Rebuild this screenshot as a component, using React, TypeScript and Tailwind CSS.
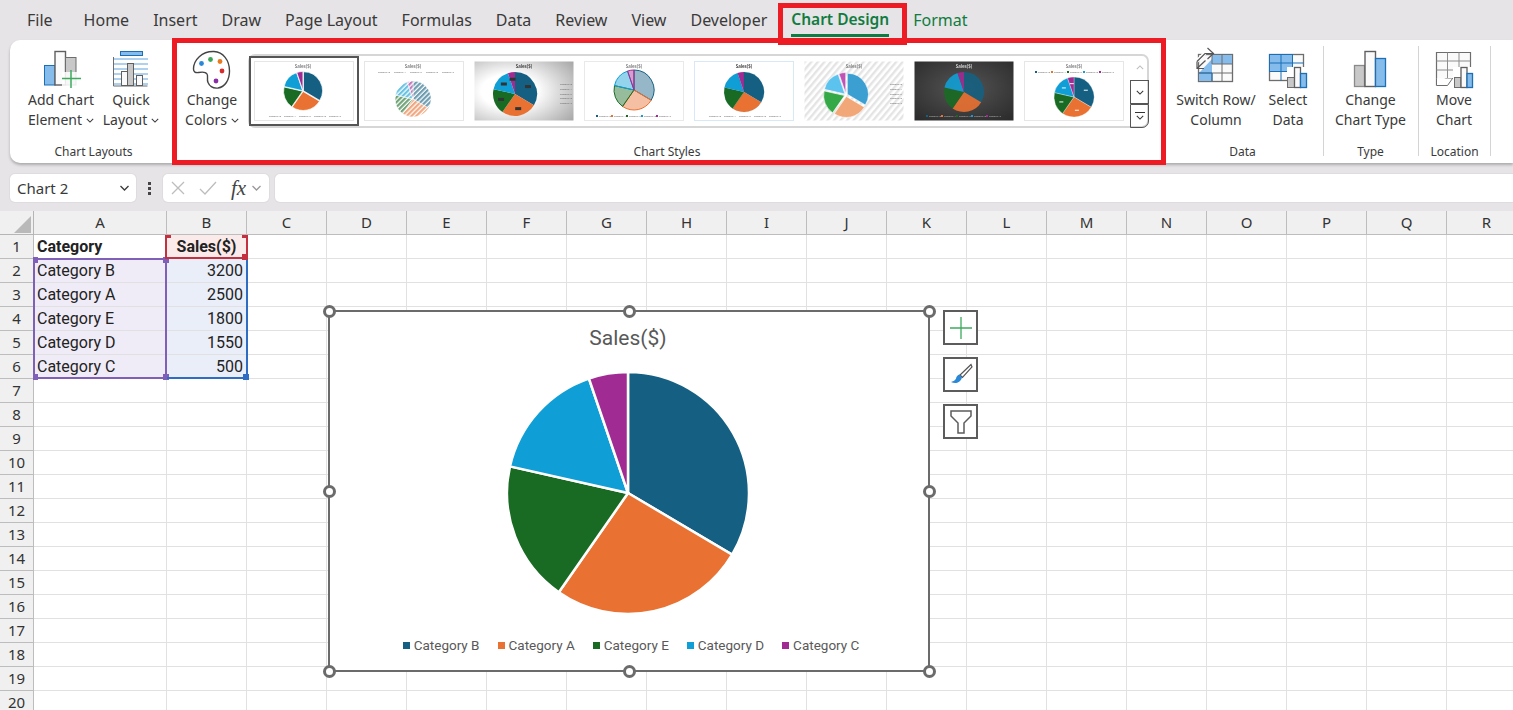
import type { ReactNode } from "react";

const uiFont = "font-['Noto_Sans',sans-serif]";
const cellFont = "font-['Roboto',sans-serif]";

const tabs = ["Home", "Insert", "Draw", "Page Layout", "Formulas", "Data", "Review", "View", "Developer"];
const columns = ["A", "B", "C", "D", "E", "F", "G", "H", "I", "J", "K", "L", "M", "N", "O", "P", "Q", "R"];
const rows = Array.from({ length: 20 }, (_, i) => i + 1);

const sales = [
  { name: "Category B", value: 3200, color: "#156082" },
  { name: "Category A", value: 2500, color: "#e97132" },
  { name: "Category E", value: 1800, color: "#196b24" },
  { name: "Category D", value: 1550, color: "#0f9ed5" },
  { name: "Category C", value: 500, color: "#a02b93" },
];

const cells: Record<string, { text: string; bold?: boolean; right?: boolean; bg?: string }> = {
  "1-A": { text: "Category", bold: true },
  "1-B": { text: "Sales($)", bold: true, bg: "bg-[#fbeaea]" },
  "2-A": { text: "Category B", bg: "bg-[#f0ecf7]" },
  "3-A": { text: "Category A", bg: "bg-[#f0ecf7]" },
  "4-A": { text: "Category E", bg: "bg-[#f0ecf7]" },
  "5-A": { text: "Category D", bg: "bg-[#f0ecf7]" },
  "6-A": { text: "Category C", bg: "bg-[#f0ecf7]" },
  "2-B": { text: "3200", right: true, bg: "bg-[#e9eef8]" },
  "3-B": { text: "2500", right: true, bg: "bg-[#e9eef8]" },
  "4-B": { text: "1800", right: true, bg: "bg-[#e9eef8]" },
  "5-B": { text: "1550", right: true, bg: "bg-[#e9eef8]" },
  "6-B": { text: "500", right: true, bg: "bg-[#e9eef8]" },
};

function slices(cx: number, cy: number, r: number, explode = 0) {
  const total = sales.reduce((sum, s) => sum + s.value, 0);
  let angle = -Math.PI / 2;
  return sales.map((s) => {
    const sweep = (s.value / total) * Math.PI * 2;
    const mid = angle + sweep / 2;
    const ox = cx + Math.cos(mid) * explode;
    const oy = cy + Math.sin(mid) * explode;
    const x1 = ox + Math.cos(angle) * r;
    const y1 = oy + Math.sin(angle) * r;
    const x2 = ox + Math.cos(angle + sweep) * r;
    const y2 = oy + Math.sin(angle + sweep) * r;
    const large = sweep > Math.PI ? 1 : 0;
    angle += sweep;
    return {
      ...s,
      mid,
      d: `M${ox} ${oy}L${x1} ${y1}A${r} ${r} 0 ${large} 1 ${x2} ${y2}Z`,
    };
  });
}

type Thumb = {
  cx: number;
  cy: number;
  r: number;
  explode?: number;
  bg: string;
  frame?: string;
  stroke?: string;
  strokeWidth?: number;
  opacity?: number;
  palette?: string[];
  titleColor?: string;
  legend: "top" | "bottom" | "right";
  legendColor?: string;
  swatches?: boolean;
  labels?: "dark" | "white";
  hatch?: boolean;
  outline?: boolean;
};

const thumbs: Thumb[] = [
  { cx: 49, cy: 30, r: 19, explode: 0.5, bg: "#fff", frame: "#e6e6e6", stroke: "#fff", strokeWidth: 0.7, legend: "bottom" },
  { cx: 49, cy: 38, r: 18, bg: "#fff", frame: "#e6e6e6", stroke: "#fff", strokeWidth: 0.5, legend: "top", hatch: true },
  { cx: 41, cy: 33, r: 22, bg: "url(#thumb-grey)", legend: "right", labels: "dark", titleColor: "#333" },
  { cx: 50, cy: 29, r: 20, bg: "#fff", frame: "#e9e9e9", opacity: 0.45, outline: true, legend: "bottom", swatches: true },
  { cx: 50, cy: 31, r: 20, bg: "#fff", frame: "#d8e8f5", legend: "bottom", titleColor: "#333", stroke: "#156082", strokeWidth: 0.1 },
  {
    cx: 42,
    cy: 34,
    r: 21,
    explode: 1.5,
    bg: "url(#thumb-stripes)",
    stroke: "#fff",
    strokeWidth: 0.6,
    palette: ["#3c9fd2", "#f2a779", "#35a948", "#5cc2ee", "#c053b6"],
    legend: "right",
  },
  { cx: 50, cy: 31, r: 20, bg: "url(#thumb-dark)", opacity: 0.9, legend: "bottom", titleColor: "#ddd", legendColor: "#bbb" },
  { cx: 50, cy: 36, r: 20, bg: "#fff", frame: "#e6e6e6", stroke: "#fff", strokeWidth: 0.3, legend: "top", swatches: true, labels: "white" },
];

function MiniChart({ t, index }: { t: Thumb; index: number }) {
  const parts = slices(t.cx, t.cy, t.r, t.explode);
  const legendFill = t.legendColor ?? "#666";
  return (
    <svg viewBox="0 0 100 60" className="h-[60px] w-[100px] shrink-0 blur-[0.35px]">
      <defs>
        <radialGradient id="thumb-grey" cx="0.35" cy="0.5" r="0.8">
          <stop offset="0.35" stopColor="#fff" />
          <stop offset="1" stopColor="#a9a9a9" />
        </radialGradient>
        <radialGradient id="thumb-dark" cx="0.5" cy="0.45" r="0.7">
          <stop offset="0" stopColor="#555" />
          <stop offset="1" stopColor="#2c2c2c" />
        </radialGradient>
        <pattern id="thumb-stripes" width="5" height="5" patternUnits="userSpaceOnUse" patternTransform="rotate(40)">
          <rect width="5" height="5" fill="#fff" />
          <rect width="2.4" height="5" fill="#e4e4e4" />
        </pattern>
        {parts.map((p) => (
          <pattern key={p.name} id={`hatch-${index}-${p.name.slice(-1)}`} width="3.4" height="3.4" patternUnits="userSpaceOnUse" patternTransform="rotate(-45)">
            <rect width="3.4" height="3.4" fill="#fff" />
            <rect width="3.4" height="2.2" fill={p.color} opacity="0.62" />
          </pattern>
        ))}
      </defs>
      <rect x="0.5" y="0.5" width="99" height="59" fill={t.bg} stroke={t.frame ?? "none"} />
      <text x={t.cx === 41 || t.cx === 42 ? 50 : t.cx} y={6.5} textAnchor="middle" fontSize="4.4" fontWeight="600" fill={t.titleColor ?? "#777"} fontFamily="Noto Sans, sans-serif">
        Sales($)
      </text>
      {parts.map((p, i) => (
        <path
          key={p.name}
          d={p.d}
          fill={t.hatch ? `url(#hatch-${index}-${p.name.slice(-1)})` : t.palette ? t.palette[i] : p.color}
          fillOpacity={t.opacity ?? 1}
          stroke={t.outline ? p.color : t.stroke ?? "none"}
          strokeWidth={t.outline ? 1 : t.strokeWidth ?? 0}
        />
      ))}
      {t.labels &&
        parts.map((p) => {
          const lx = t.cx + Math.cos(p.mid) * t.r * 0.68;
          const ly = t.cy + Math.sin(p.mid) * t.r * 0.68;
          return t.labels === "dark" ? (
            <rect key={p.name} x={lx - 3} y={ly - 1.5} width="6" height="3" fill="#333" />
          ) : (
            <rect key={p.name} x={lx - 2} y={ly - 0.6} width="4" height="1.2" fill="#fff" opacity="0.8" />
          );
        })}
      {t.legend === "bottom" &&
        sales.map((s, i) => (
          <g key={s.name}>
            {(t.swatches || t.legendColor) && <rect x={12 + i * 15} y={54} width="2" height="2" fill={s.color} />}
            <text x={15 + i * 15} y={56} fontSize="2.3" fill={legendFill} fontFamily="Noto Sans, sans-serif">
              {s.name}
            </text>
          </g>
        ))}
      {t.legend === "top" &&
        sales.map((s, i) => (
          <g key={s.name}>
            {t.swatches && <rect x={11 + i * 16} y={10} width="2" height="2" fill={s.color} />}
            <text x={14 + i * 16} y={12} fontSize="2.3" fill={legendFill} fontFamily="Noto Sans, sans-serif">
              {s.name}
            </text>
          </g>
        ))}
      {t.legend === "right" &&
        sales.map((s, i) => (
          <text key={s.name} x={86} y={24 + i * 4.8} fontSize="2.3" fill={legendFill} fontFamily="Noto Sans, sans-serif">
            {s.name}
          </text>
        ))}
    </svg>
  );
}

function Chevron({ className = "" }: { className?: string }) {
  return (
    <svg viewBox="0 0 10 6" className={`h-[5px] w-[8px] ${className}`} fill="none" stroke="currentColor" strokeWidth="1.3">
      <path d="M1 1l4 4 4-4" />
    </svg>
  );
}

function AddChartIcon() {
  return (
    <svg viewBox="0 0 40 40" className="h-10 w-10">
      <rect x="3.500" y="15.500" width="10.500" height="19.500" fill="#85bcec" stroke="#1a6fb5" />
      <rect x="14" y="1.500" width="10.500" height="33.500" fill="#fafafa" stroke="#5f5f5f" strokeWidth="1.400" />
      <rect x="24.500" y="7.500" width="10.500" height="27.500" fill="#c8c8c8" stroke="#6d6d6d" />
      <rect x="21" y="22" width="17" height="16" fill="#fff" opacity="0.85" />
      <path d="M30 20v18M21 28.500h19" stroke="#3eaa5e" strokeWidth="1.500" />
    </svg>
  );
}

function QuickLayoutIcon() {
  return (
    <svg viewBox="0 0 40 40" className="h-10 w-10">
      <rect x="9.500" y="1.500" width="22" height="4" fill="#85bcec" stroke="#1a6fb5" />
      <path d="M2 9h35M2 14h35M2 19h35M2 24h35M2 29h35M2 34h35" stroke="#5ea4e2" strokeWidth="1.200" />
      <path d="M2.500 7v29h34" stroke="#6d6d6d" fill="none" />
      <rect x="10.500" y="21.500" width="6" height="14" fill="#fafafa" stroke="#5f5f5f" />
      <rect x="16.500" y="13.500" width="6" height="22" fill="#c8c8c8" stroke="#5f5f5f" />
      <rect x="25.500" y="25.500" width="6" height="10" fill="#fafafa" stroke="#5f5f5f" />
    </svg>
  );
}

function PaletteIcon() {
  return (
    <svg viewBox="0 0 40 40" className="h-10 w-10">
      <path
        d="M22 1.500C10 1 1.500 10 1.500 19c0 3 2 4 5 3.500 4-.7 7-1 8.500 1.500 1.500 2.500-.5 5 1 8.500 1.500 3.500 5 6 10 5.500 7-1 11.500-8 11.500-17C37.500 10 31 2 22 1.500z"
        fill="#fff"
        stroke="#444"
        strokeWidth="1.400"
      />
      <circle cx="9.500" cy="13.500" r="2.400" fill="#2b88d8" />
      <circle cx="18.500" cy="9.500" r="2.400" fill="#3aa655" />
      <circle cx="28" cy="11.500" r="2.400" fill="#ea7a1c" />
      <circle cx="30" cy="21" r="2.400" fill="#d92b2b" />
      <circle cx="24" cy="31" r="2.400" fill="#8a2ea8" />
    </svg>
  );
}

function SwitchIcon() {
  return (
    <svg viewBox="0 0 40 40" className="h-10 w-10 overflow-visible">
      <rect x="2.500" y="4.500" width="34" height="27" fill="#fafafa" stroke="#6d6d6d" strokeWidth="1.300" />
      <path d="M16 5h20v9H16z" fill="#85bcec" />
      <path d="M3 23L16 9v14z" fill="#85bcec" />
      <path d="M3 23h13v8H3z" fill="#85bcec" />
      <path d="M3 23h13v8.500M16 14h20M26 4.500v27M16 23h20M16 5v9" fill="none" stroke="#6d6d6d" strokeWidth="1" />
      <path d="M3 23h13v8" fill="none" stroke="#1a6fb5" strokeWidth="1" />
      <path d="M0 12L10 2h8" fill="none" stroke="#fff" strokeWidth="3.500" />
      <path d="M11.500 -2l6 5.500-6 5.500M17 3.500H9l-8 8" fill="none" stroke="#555" strokeWidth="1.200" />
      <path d="M1 11.500v7h7M1.500 18l8-7.500" fill="none" stroke="#555" strokeWidth="1.200" />
    </svg>
  );
}

function SelectDataIcon() {
  return (
    <svg viewBox="0 0 40 40" className="h-10 w-10">
      <rect x="1.500" y="4.500" width="34" height="26" fill="#fafafa" stroke="#6d6d6d" strokeWidth="1.300" />
      <rect x="1.500" y="4.500" width="23" height="17" fill="#85bcec" stroke="#1a6fb5" />
      <path d="M13 4.500v26M24.500 4.500v26M1.500 13h34M1.500 21.500h34" stroke="#1a6fb5" strokeWidth="1" fill="none" />
      <rect x="19" y="17" width="22" height="23" fill="#fff" />
      <rect x="19.500" y="27.500" width="7" height="10" fill="#c8c8c8" stroke="#6d6d6d" />
      <rect x="26.500" y="17.500" width="6" height="20" fill="#fafafa" stroke="#5f5f5f" strokeWidth="1.300" />
      <rect x="32.500" y="23.500" width="6" height="14" fill="#85bcec" stroke="#1a6fb5" strokeWidth="1.300" />
    </svg>
  );
}

function ChangeTypeIcon() {
  return (
    <svg viewBox="0 0 40 40" className="h-10 w-10">
      <rect x="4.500" y="15.500" width="10" height="21" fill="#c8c8c8" stroke="#8a8a8a" strokeWidth="1.300" />
      <rect x="15" y="1.500" width="10.500" height="35" fill="#fafafa" stroke="#5f5f5f" strokeWidth="1.400" />
      <rect x="25.500" y="8.500" width="10" height="28" fill="#85bcec" stroke="#1a6fb5" strokeWidth="1.300" />
    </svg>
  );
}

function MoveChartIcon() {
  return (
    <svg viewBox="0 0 40 40" className="h-10 w-10">
      <path d="M2.500 2.500h34v26H12l-9.500 6z" fill="#fafafa" stroke="#6d6d6d" strokeWidth="1.200" />
      <path d="M2.500 11h34M2.500 20h34M13.500 2.500v26M25 2.500v26" stroke="#8c8c8c" strokeWidth="1" />
      <path d="M2.500 28.500v7h11l5-7" fill="#fff" stroke="#6d6d6d" strokeWidth="1" />
      <rect x="19" y="17" width="22" height="23" fill="#fff" />
      <rect x="20.500" y="27.500" width="6.500" height="10" fill="#c8c8c8" stroke="#6d6d6d" />
      <rect x="27" y="17.500" width="6" height="20" fill="#fafafa" stroke="#5f5f5f" strokeWidth="1.300" />
      <rect x="33" y="23.500" width="5.500" height="14" fill="#85bcec" stroke="#1a6fb5" strokeWidth="1.300" />
    </svg>
  );
}

function RibbonButton({ icon, lines, caret, className = "" }: { icon: ReactNode; lines: string[]; caret?: boolean; className?: string }) {
  return (
    <div className={`flex flex-col items-center pt-[10px] ${className}`}>
      {icon}
      <div className="text-center text-[14px] leading-[20px] whitespace-nowrap text-[#3a3a3a]">
        <div>{lines[0]}</div>
        <div className="flex items-center justify-center gap-[4px]">
          {lines[1]}
          {caret && <Chevron />}
        </div>
      </div>
    </div>
  );
}

function RibbonGroup({
  label,
  children,
  className = "",
  labelClass = "",
  divider,
}: {
  label: string;
  children: ReactNode;
  className?: string;
  labelClass?: string;
  divider?: boolean;
}) {
  return (
    <div className={`relative flex shrink-0 flex-col ${className}`}>
      <div className="flex h-[99px] justify-center">{children}</div>
      <div className={`h-[24px] text-center text-[12px] leading-[26px] text-[#3a3a3a] ${labelClass}`}>{label}</div>
      {divider && <div className="absolute top-[6px] -right-px h-[110px] w-px bg-[#d4d4d4]" />}
    </div>
  );
}

function Handle({ className }: { className: string }) {
  return <span className={`absolute h-[13px] w-[13px] rounded-full border-[3px] border-[#6b6b6b] bg-white ${className}`} />;
}

function SideButton({ children }: { children: ReactNode }) {
  return <div className="flex h-[35px] w-[35px] items-center justify-center border-2 border-[#5c5c5c] bg-white">{children}</div>;
}

export default function App() {
  return (
    <div className={`relative h-[710px] w-[1513px] overflow-hidden bg-[#e6e4e6] ${uiFont}`}>
      {/* tabs */}
      <div className="flex h-[40px] items-center gap-[24px] pl-[27px] text-[16px] text-[#3a3a3a]">
        <span className="mr-[7px]">File</span>
        {tabs.map((tab) => (
          <span key={tab} className="whitespace-nowrap">
            {tab}
          </span>
        ))}
        <span className="relative text-[15.500px] font-semibold whitespace-nowrap text-[#107c41]">
          Chart Design
          <span className="absolute right-0 -bottom-[5px] left-0 h-[3px] bg-[#107c41]" />
        </span>
        <span className="text-[#107c41]">Format</span>
      </div>

      {/* ribbon */}
      <div className="ml-[10px] flex h-[123px] rounded-l-[10px] bg-white shadow-[0_2px_3px_rgba(0,0,0,0.25)]">
        <RibbonGroup label="Chart Layouts" className="w-[162px]" labelClass="pl-[5px]">
          <RibbonButton icon={<AddChartIcon />} lines={["Add Chart", "Element"]} caret className="ml-[14px] w-[74px]" />
          <RibbonButton icon={<QuickLayoutIcon />} lines={["Quick", "Layout"]} caret className="mr-[11px] ml-[3px] w-[60px]" />
        </RibbonGroup>

        <RibbonGroup label="Chart Styles" className="w-[994px]" labelClass="pr-[4px]">
          <div className="flex h-full w-full">
            <RibbonButton icon={<PaletteIcon />} lines={["Change", "Colors"]} caret className="ml-[10px] w-[60px]" />
            <div className="mt-[14px] ml-[6px] flex h-[74px] w-[901px] rounded-[7px] border-2 border-[#d6d6d6] pl-[4px]">
              <div className="flex flex-1 items-center gap-[10px]">
                {thumbs.map((t, i) => (
                  <div key={i} className={i === 0 ? "outline-2 outline-offset-[3px] outline-[#555]" : ""}>
                    <MiniChart t={t} index={i} />
                  </div>
                ))}
              </div>
              <div className="-my-[2px] -mr-[2px] flex w-[19px] flex-col text-[#333]">
                <div className="flex h-[26px] items-center justify-center text-[#bdbdbd]">
                  <Chevron className="rotate-180" />
                </div>
                <div className="flex h-[24px] items-center justify-center border border-[#555]">
                  <Chevron />
                </div>
                <div className="flex h-[24px] flex-col items-center justify-center gap-[2px] rounded-br-[7px] border border-[#555]">
                  <span className="h-px w-[10px] bg-[#333]" />
                  <Chevron />
                </div>
              </div>
            </div>
          </div>
        </RibbonGroup>

        <RibbonGroup label="Data" className="w-[157px]" labelClass="pr-[4px]" divider>
          <RibbonButton icon={<SwitchIcon />} lines={["Switch Row/", "Column"]} className="ml-[8px] w-[84px]" />
          <RibbonButton icon={<SelectDataIcon />} lines={["Select", "Data"]} className="mr-[8px] ml-[3px] w-[54px]" />
        </RibbonGroup>
        <RibbonGroup label="Type" className="w-[95px]" divider>
          <RibbonButton icon={<ChangeTypeIcon />} lines={["Change", "Chart Type"]} />
        </RibbonGroup>
        <RibbonGroup label="Location" className="w-[72px]" labelClass="pl-[1px]" divider>
          <RibbonButton icon={<MoveChartIcon />} lines={["Move", "Chart"]} />
        </RibbonGroup>
      </div>

      {/* formula bar */}
      <div className="mt-[11px] flex h-[28px] items-stretch pl-[10px]">
        <div className="flex w-[126px] items-center justify-between rounded-[5px] bg-white pr-[6px] pl-[7px] text-[15px] text-[#3a3a3a] shadow-[0_0_0_1px_#dedcde]">
          Chart 2
          <Chevron className="h-[6px] w-[11px]" />
        </div>
        <div className="flex w-[27px] flex-col items-center justify-center gap-[2px]">
          <span className="h-[3px] w-[3px] bg-[#444]" />
          <span className="h-[3px] w-[3px] bg-[#444]" />
          <span className="h-[3px] w-[3px] bg-[#444]" />
        </div>
        <div className="flex w-[106px] items-center rounded-[5px] bg-white pl-[8px] shadow-[0_0_0_1px_#dedcde]">
          <svg viewBox="0 0 14 14" className="h-[14px] w-[14px]" fill="none" stroke="#bdbdbd" strokeWidth="1.300">
            <path d="M1 1l12 12M13 1L1 13" />
          </svg>
          <svg viewBox="0 0 18 14" className="ml-[14px] h-[14px] w-[18px]" fill="none" stroke="#bdbdbd" strokeWidth="1.300">
            <path d="M1 8l5 5L17 1" />
          </svg>
          <span className="ml-[14px] font-['Liberation_Serif',serif] text-[21px] leading-none font-medium text-[#444] italic">fx</span>
          <Chevron className="ml-[5px] h-[6px] w-[11px] text-[#999]" />
        </div>
        <div className="ml-[6px] flex-1 rounded-l-[5px] bg-white shadow-[0_0_0_1px_#dedcde]" />
      </div>

      {/* sheet */}
      <div className={`relative mt-[9px] grid grid-cols-[34px_133px_repeat(17,80px)] auto-rows-[24px] bg-white text-[16px] text-[#222] ${cellFont}`}>
        <div className="relative border-r border-b border-[#b5b5b5] bg-[#f0f0f0]">
          <span className="absolute right-[2px] bottom-[1px] h-[17px] w-[17px] bg-[#b9b9b9] [clip-path:polygon(100%_0,100%_100%,0_100%)]" />
        </div>
        {columns.map((col) => (
          <div key={col} className={`flex items-center justify-center border-r border-b border-[#bdbdbd] bg-[#f0f0f0] text-[15px] text-[#333] ${uiFont}`}>
            {col}
          </div>
        ))}
        {rows.map((row) => (
          <div key={row} className="contents">
            <div className={`flex items-center justify-center border-r border-b border-[#bdbdbd] bg-[#f0f0f0] text-[15px] text-[#333] ${uiFont}`}>{row}</div>
            {columns.map((col) => {
              const cell = cells[`${row}-${col}`];
              return (
                <div
                  key={col}
                  className={`flex items-center overflow-visible border-r border-b border-[#e1e1e1] px-[3px] pt-[1px] whitespace-nowrap ${cell?.bg ?? ""} ${cell?.right ? "justify-end" : ""} ${cell?.bold ? "font-bold" : ""} ${row === 1 && col === "B" ? "justify-center" : ""}`}
                >
                  {cell?.text}
                </div>
              );
            })}
          </div>
        ))}

        {/* range highlights */}
        <div className="pointer-events-none absolute top-[47px] left-[33px] h-[121px] w-[134px] border-2 border-[#7f5fb8]">
          <span className="absolute -top-[3px] -left-[2px] h-[6px] w-[5px] bg-[#7f5fb8]" />
          <span className="absolute -top-[3px] -right-[4px] h-[6px] w-[6px] bg-[#7f5fb8]" />
          <span className="absolute -bottom-[3px] -left-[2px] h-[6px] w-[5px] bg-[#7f5fb8]" />
          <span className="absolute -right-[4px] -bottom-[3px] h-[6px] w-[6px] bg-[#7f5fb8]" />
        </div>
        <div className="pointer-events-none absolute top-[47px] left-[167px] h-[121px] w-[81px] border-r-2 border-b-2 border-[#2f6cc4]">
          <span className="absolute -right-[3px] -bottom-[3px] h-[6px] w-[6px] bg-[#2f6cc4]" />
        </div>
        <div className="pointer-events-none absolute top-[24px] left-[165px] h-[24px] w-[83px] border-x-2 border-b-2 border-[#c4303f]">
          <span className="absolute top-0 -left-[1px] h-[3px] w-[5px] bg-[#c4303f]" />
          <span className="absolute top-0 -right-[1px] h-[3px] w-[5px] bg-[#c4303f]" />
          <span className="absolute -right-[2px] -bottom-[3px] h-[6px] w-[6px] bg-[#c4303f]" />
        </div>

        {/* chart */}
        <div className={`absolute top-[99px] left-[328px] flex h-[362px] w-[602px] flex-col items-center border-2 border-[#6b6b6b] bg-white ${cellFont}`}>
          <div className="mt-[13px] mr-[2px] h-[26px] text-[21px] leading-[26px] text-[#595959]">Sales($)</div>
          <svg viewBox="0 0 246 246" className="mt-[19px] mr-[2px] h-[246px] w-[246px]">
            {slices(123, 123, 121).map((s) => (
              <path key={s.name} d={s.d} fill={s.color} stroke="#fff" strokeWidth="2.500" />
            ))}
          </svg>
          <div className="mt-[19px] ml-[4px] flex items-center gap-[18px] text-[13.500px] text-[#595959]">
            {sales.map((s) => (
              <div key={s.name} className="flex items-center gap-[4px]">
                <span className="h-[7px] w-[7px]" style={{ backgroundColor: s.color }} />
                {s.name}
              </div>
            ))}
          </div>
          <Handle className="-top-[7px] -left-[7px]" />
          <Handle className="-top-[7px] left-[293px]" />
          <Handle className="-top-[7px] -right-[8px]" />
          <Handle className="top-[173px] -left-[7px]" />
          <Handle className="top-[173px] -right-[8px]" />
          <Handle className="-bottom-[8px] -left-[7px]" />
          <Handle className="-bottom-[8px] left-[293px]" />
          <Handle className="-right-[8px] -bottom-[8px]" />
        </div>

        {/* chart side buttons */}
        <div className="absolute top-[99px] left-[943px] flex flex-col gap-[12px]">
          <SideButton>
            <svg viewBox="0 0 22 22" className="h-[22px] w-[22px]" stroke="#3eaa5e" strokeWidth="1.300">
              <path d="M11 0v22M0 11h22" />
            </svg>
          </SideButton>
          <SideButton>
            <svg viewBox="0 0 24 24" className="h-[24px] w-[24px]">
              <path d="M22 1.500L11 12l2.500 2.500L23 4z" fill="#fff" stroke="#555" strokeWidth="1.200" />
              <path d="M10.500 11.500c-2 .5-3 2-3.500 4-.5 1.500-2 2.500-5 3.500 4 2 9 1.500 11-4.500z" fill="#2b88d8" />
            </svg>
          </SideButton>
          <SideButton>
            <svg viewBox="0 0 24 26" className="h-[26px] w-[24px]" fill="#fff" stroke="#5c5c5c" strokeWidth="1.500">
              <path d="M2 2h20v5l-7 7v10h-6V14L2 7z" />
            </svg>
          </SideButton>
        </div>
      </div>

      {/* annotation boxes drawn on top of the screenshot */}
      <div className="pointer-events-none absolute top-[38px] left-[172px] h-[127px] w-[994px] border-[5px] border-[#ed1c24]" />
      <div className="pointer-events-none absolute top-[3px] left-[778px] h-[42px] w-[129px] border-[5px] border-[#ed1c24]" />
    </div>
  );
}
